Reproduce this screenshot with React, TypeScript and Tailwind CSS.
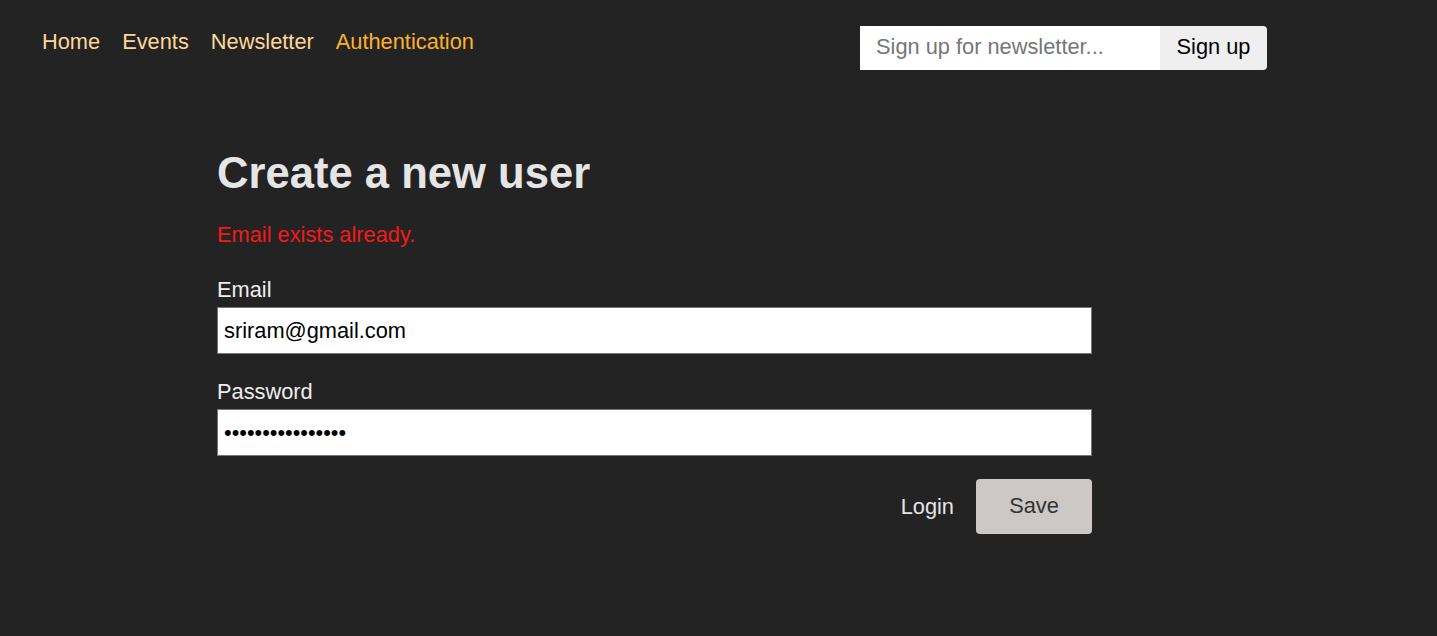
import React from "react";

export default function App() {
  return (
    <div className="min-h-[636px] w-full bg-[#232323] font-['Liberation_Sans',Arial,sans-serif] text-[#e5e5e5]">
      <header className="flex items-start pl-[42px] pt-[26px]">
        <nav className="flex gap-[22px] pt-[3px] text-[21.8px] leading-[25px]">
          <a className="text-[#fcd79a]" href="#">Home</a>
          <a className="text-[#fcd79a]" href="#">Events</a>
          <a className="text-[#fcd79a]" href="#">Newsletter</a>
          <a className="text-[#fcb12c]" href="#">Authentication</a>
        </nav>
        <form className="ml-auto mr-[170px] flex h-[44px]">
          <input
            className="h-[44px] w-[300px] bg-white px-[16px] pb-[2px] text-[21.8px] text-black outline-none placeholder:text-[#767676]"
            placeholder="Sign up for newsletter..."
          />
          <button
            type="button"
            className="h-[44px] w-[107px] rounded-r-[4px] bg-[#efefef] pb-[2px] text-[21.8px] text-black"
          >
            Sign up
          </button>
        </form>
      </header>

      <main className="ml-[217px] mt-[78px] w-[875px]">
        <h1 className="text-[43.6px] font-bold leading-[50px] text-[#e5e5e5]">Create a new user</h1>
        <p className="mt-[24px] text-[21.8px] leading-[25px] text-[#f31a1a]">Email exists already.</p>

        <label className="mt-[30px] block text-[21.8px] leading-[25px] text-[#eeeeee]">Email</label>
        <input
          className="mt-[5px] block h-[47px] w-[875px] border border-[#767676] bg-white px-[6px] text-[21.8px] text-black outline-none"
          defaultValue="sriram@gmail.com"
        />

        <label className="mt-[25px] block text-[21.8px] leading-[25px] text-[#eeeeee]">Password</label>
        <input
          type="password"
          className="mt-[5px] block h-[47px] w-[875px] border border-[#767676] bg-white px-[6px] text-[21.8px] text-black outline-none"
          defaultValue="sriram1234567890"
        />

        <div className="mt-[23px] flex items-center justify-end gap-[22px]">
          <a href="#" className="text-[21.8px] leading-[25px] text-[#e5e5e5]">Login</a>
          <button
            type="button"
            className="h-[55px] w-[116px] rounded-[4px] bg-[#cdc8c5] text-[21.8px] text-[#333333]"
          >
            Save
          </button>
        </div>
      </main>
    </div>
  );
}
